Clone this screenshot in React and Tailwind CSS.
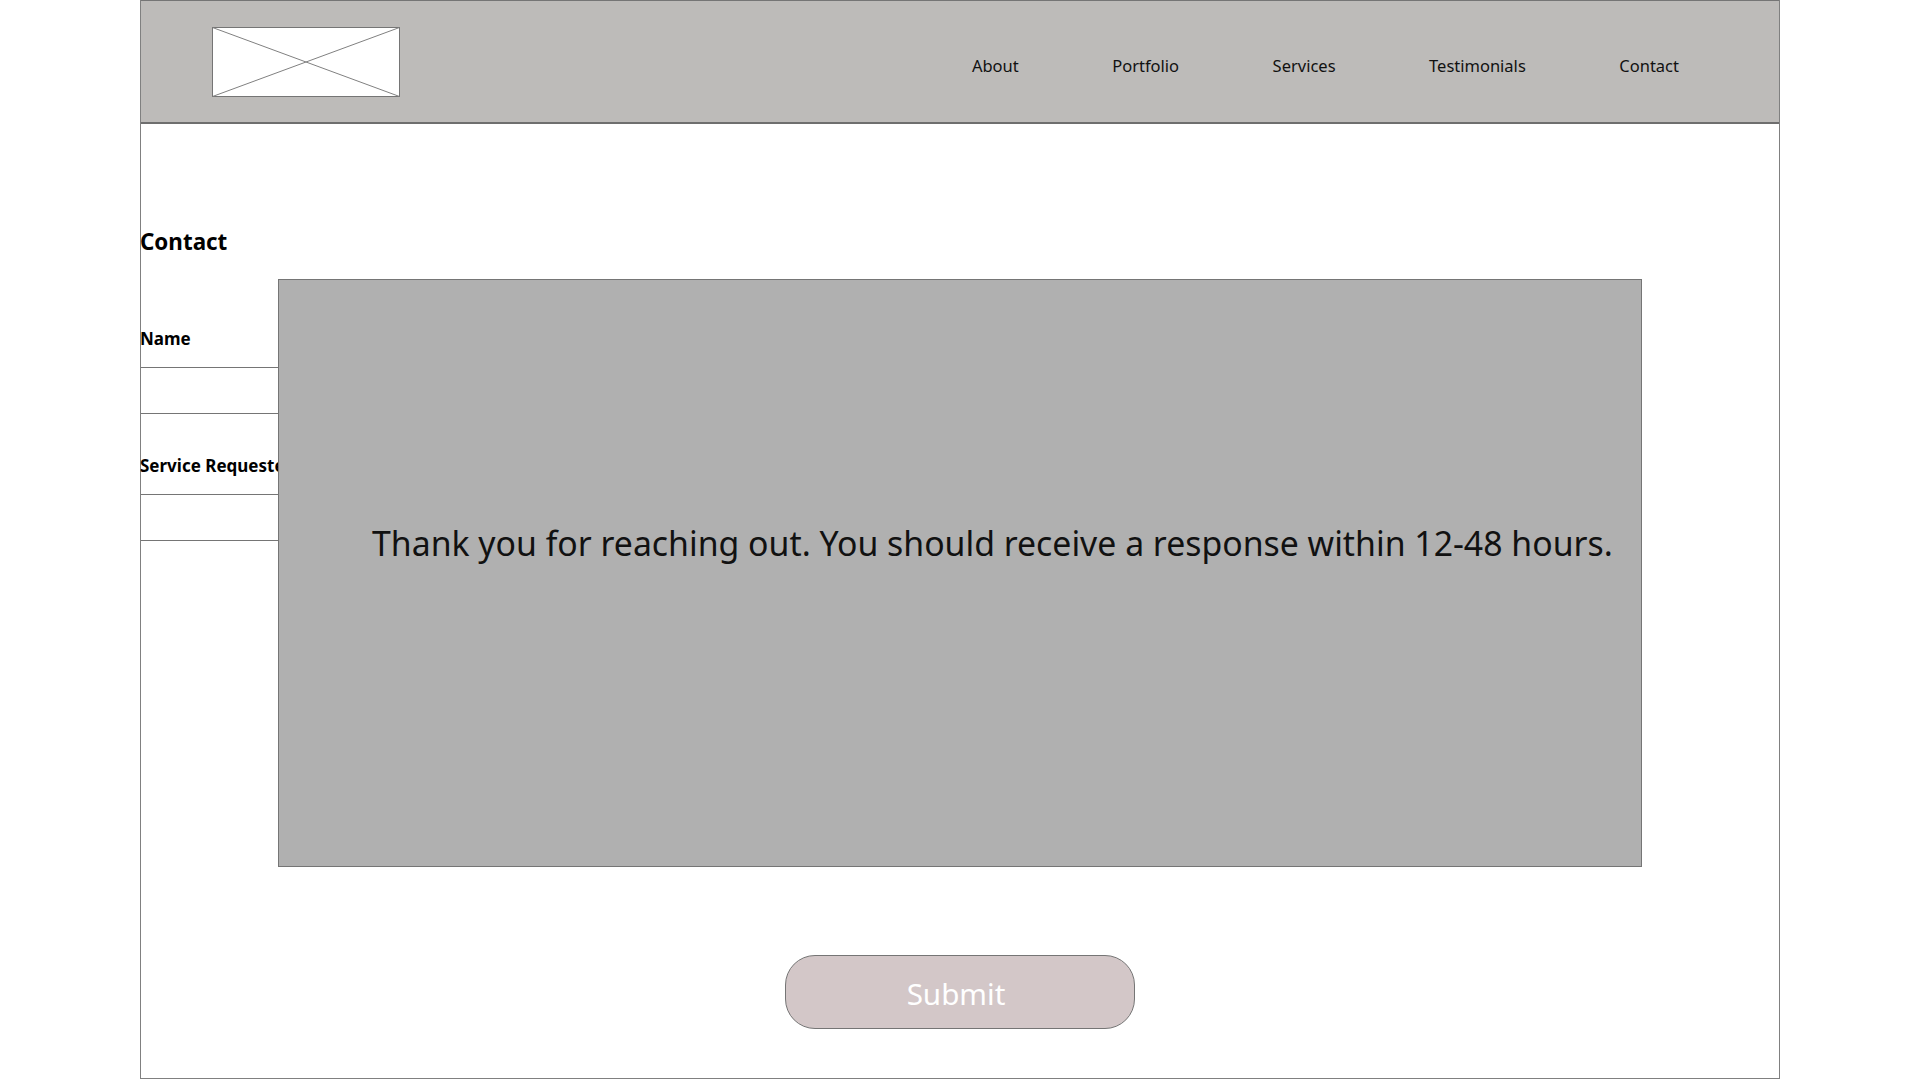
const navLinks = ["About", "Portfolio", "Services", "Testimonials", "Contact"];

const Logo = () => (
  <svg width="188" height="70" viewBox="0 0 188 70" className="block bg-white">
    <rect x="0.5" y="0.5" width="187" height="69" fill="none" stroke="#757575" />
    <path d="M0.5 0.5L187.5 69.5M187.5 0.5L0.5 69.5" fill="none" stroke="#808080" />
  </svg>
);

const Field = ({ label, className }) => (
  <div className={className}>
    <p className="-ml-px text-[17px] leading-[24px] font-bold text-black whitespace-nowrap">{label}</p>
    <div className="mt-[16px] h-[47px] w-[300px] border-y border-[#757575]" />
  </div>
);

export default function App() {
  return (
    <div className="h-[1081px] w-[1920px] overflow-hidden bg-white font-['Noto_Sans',sans-serif] text-black">
      <div className="relative ml-[140px] h-[1079px] w-[1640px] border-x border-b border-[#808080]">
        <header className="flex h-[124px] items-start border-y border-b-2 border-t-[#757575] border-b-[#6e6e6e] bg-[#bdbbb9] pl-[71px] pr-[100px]">
          <div className="mt-[26px]">
            <Logo />
          </div>
          <nav className="ml-auto mt-[53px] flex gap-[93.5px] text-[16.5px] leading-6">
            {navLinks.map((link) => (
              <a key={link} href="#" className="text-[#111]">
                {link}
              </a>
            ))}
          </nav>
        </header>

        <main>
          <h1 className="-ml-px mt-[102px] text-[22.4px] leading-[32px] font-bold">Contact</h1>
          <Field label="Name" className="mt-[69px]" />
          <Field label="Service Requested" className="mt-[40px]" />
          <button className="ml-[644px] mt-[414px] block h-[74px] w-[350px] rounded-[30px] border border-[#757575] bg-[#d3c7c8] pr-[8px] pt-[4px] text-[29.6px] text-white">
            Submit
          </button>
        </main>

        <div className="absolute left-[137px] top-[279px] h-[588px] w-[1364px] border border-[#757575] bg-[#b0b0b0] pl-[93px] pt-[239px]">
          <p className="whitespace-nowrap text-[33.8px] leading-[48px] text-[#111]">
            Thank you for reaching out. You should receive a response within 12-48 hours.
          </p>
        </div>
      </div>
    </div>
  );
}
